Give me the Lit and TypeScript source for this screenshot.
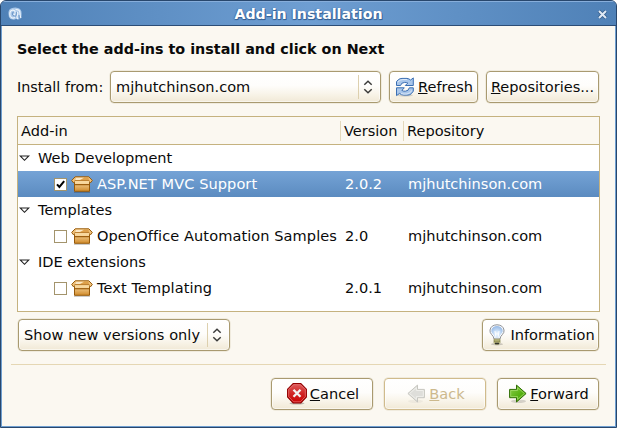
import { LitElement, html, css, svg, nothing } from "lit";
import { customElement, property } from "lit/decorators.js";
import { classMap } from "lit/directives/class-map.js";

const refreshIcon = svg`
<svg width="20" height="20" viewBox="0 0 20 20">
  <ellipse cx="10" cy="18.3" rx="8" ry="1.4" fill="#000" opacity=".13"/>
  <path d="M1.5 8.5V4.6L3.4 2.6Q5 1.4 7 1.4H12Q14 1.6 15.6 3L18.3 .9V8.5H10.3L12.8 6Q11.6 5.3 9.6 5.4Q6 5.6 5.6 8.5Z" fill="#a9c6ea" stroke="#3b6fb3" stroke-linejoin="round"/>
  <path d="M18.3 10.8V14.2L16.4 16.6Q15 18 13 18.1H8.5Q6.2 18 4.6 16.4L1.5 18.6V10.8H9.3L6.9 13.4Q8.4 14.4 10.4 14.2Q13.6 14 14.3 10.8Z" fill="#a9c6ea" stroke="#3b6fb3" stroke-linejoin="round"/>
  <path d="M2.8 5.2Q5 2.5 8 2.5H12M6 16.6Q9 17.4 12 17Q15 16.2 17 13.5" fill="none" stroke="#dbe8f8"/>
</svg>`;

const bulbIcon = svg`
<svg width="20" height="22" viewBox="0 0 20 22">
  <defs><radialGradient id="glass" cx=".5" cy=".65" r=".6"><stop offset="0" stop-color="#fafdff"/><stop offset=".45" stop-color="#c9dff7"/><stop offset="1" stop-color="#9bbce6"/></radialGradient></defs>
  <ellipse cx="10" cy="20.2" rx="6" ry="1.2" fill="#000" opacity=".18"/>
  <path d="M7 15Q6.8 12.5 4.6 10.5Q2.6 8.5 3 6Q4 1 10 .8Q16 1 17 6Q17.4 8.5 15.4 10.5Q13.2 12.5 13 15Z" fill="#fff" stroke="#8b8f96"/>
  <path d="M8 14Q7.8 12 5.7 9.8Q3.8 7.8 4.4 5.8Q5.7 2.2 10 2Q14.3 2.2 15.6 5.8Q16.2 7.8 14.3 9.8Q12.2 12 12 14Z" fill="url(#glass)"/>
  <path d="M8 7L9 14M12 7L11 14" stroke="#fff" stroke-width=".9"/>
  <path d="M7 15.2H13V18.5L11.5 20.3H8.5L7 18.5Z" fill="#d4d391" stroke="#8e8d58" stroke-width=".8"/>
  <path d="M7 17.1H13" stroke="#77753e"/><path d="M8 19.4H12" stroke="#34342c" stroke-width="1.6"/>
</svg>`;

const cancelIcon = svg`
<svg width="20" height="22" viewBox="0 0 20 22">
  <defs><linearGradient id="red" x2="0" y2="1"><stop offset="0" stop-color="#df5b5b"/><stop offset=".55" stop-color="#cf2222"/><stop offset="1" stop-color="#c00"/></linearGradient></defs>
  <ellipse cx="10" cy="20.3" rx="7.5" ry="1.2" fill="#000" opacity=".25"/>
  <path d="M6.2 .6H13.8L19.4 6.2V14L13.8 19.9H6.2L.6 14V6.2Z" fill="url(#red)" stroke="#920000" stroke-width="1.1"/>
  <path d="M6.6 1.7H13.4L18.3 6.6V13.6L13.4 18.8H6.6L1.7 13.6V6.6Z" fill="none" stroke="#ef8a8a" stroke-width=".8" opacity=".75"/>
  <path d="M6.5 6.7L13.5 13.7M13.5 6.7L6.5 13.7" stroke="#f4f2f2" stroke-width="2.3"/>
</svg>`;

const arrow = (cls: string) => svg`
<svg class=${cls} width="18" height="20" viewBox="0 0 18 20">
  <defs><linearGradient id="green" x2="1" y2="1"><stop offset="0" stop-color="#8ed04c"/><stop offset=".6" stop-color="#55b010"/><stop offset="1" stop-color="#4e9f09"/></linearGradient></defs>
  <ellipse class="shade" cx="9.5" cy="17.2" rx="7.5" ry="1.7"/>
  <path class="body" d="M.6 5.4H7.5V1.1L17.1 9.5L7.5 18V13.7H.6Z"/>
  <path class="shine" d="M1.7 6.5H8.6V3.6L15.4 9.5L8.6 15.5V12.6H1.7Z"/>
</svg>`;

const boxIcon = svg`
<svg width="22" height="17" viewBox="0 0 22 17">
  <defs><linearGradient id="carton" x2="0" y2="1"><stop offset="0" stop-color="#f6d397"/><stop offset="1" stop-color="#d08a2b"/></linearGradient></defs>
  <path d="M3 16.3H19" stroke="#000" stroke-width="1.2" opacity=".22"/>
  <path d="M3.5 6.5H18.5V15.3H3.5Z" fill="url(#carton)" stroke="#965909"/>
  <path d="M4 8.7H18" stroke="#9c5d0e" stroke-width="1.2"/>
  <path d="M4.2 .8H17.8L21.3 4.4L19.8 6.6L18.4 6H3.6L2.2 6.6L.7 4.4Z" fill="#f0c27b" stroke="#965909" stroke-linejoin="round"/>
  <path d="M4.5 1.5H17.5L18 4.2H4Z" fill="#dda04b"/>
  <path d="M4.8 1.8H13L9 3.9H4.2Z" fill="#fbe8c5"/>
  <path d="M3.6 4.6H18.4" stroke="#a4620e" stroke-width=".7"/>
  <path d="M4 5.1H18V7.8H4Z" fill="#f8d89f"/>
</svg>`;

const logoIcon = svg`
<svg width="16" height="14" viewBox="0 0 16 14">
  <path d="M1.5 7Q1 2.5 4.5 1.3Q8 0 11 1Q14.8 2 14.6 6.5Q14.8 11 12 12.5L9 12L7 12.8L3.5 12Q1.3 10.5 1.5 7Z" fill="#a9c7e8"/>
  <path d="M3.2 9.5Q1.8 4 5.5 3.2Q8.5 3 8.2 6Q8 8 6.2 7.8M8.5 2.7Q13 2 13 6.5Q12.8 8.5 14 11M9.8 5.2Q11 5 10.8 7Q9 10 11 12M3.5 9.5Q5 12 8 10.5" fill="none" stroke="#edf4fb" stroke-width="1.2"/>
  <path d="M6.8 5.2Q5 5 5.3 7Q5.6 9 7.6 9M8.6 9.7Q9.7 8 9.3 5M12 8L12.4 12" fill="none" stroke="#6d97c8"/>
</svg>`;

const spinIcon = svg`
<svg width="10" height="14" viewBox="0 0 10 14"><path d="M1.3 4.8L5 1.3L8.7 4.8M1.3 9.2L5 12.7L8.7 9.2" fill="none" stroke="#3c3c3a" stroke-width="1.5"/></svg>`;

const expanderIcon = svg`
<svg width="11" height="7" viewBox="0 0 11 7"><path d="M1.2 1H9.8L5.5 5.3Z" fill="#fff" stroke="#222" stroke-width="1.1"/></svg>`;

const controlStyles = css`
  :host { display: block; box-sizing: border-box; height: 32px; border: 1px solid #a99a70; border-radius: 4px;
    background: linear-gradient(#fff 0%, #fefdfb 45%, #f9f5eb 70%, #f1e9d6 100%);
    box-shadow: inset 0 0 0 1px rgba(255,255,255,.55), 0 0 0 .5px rgba(190,175,135,.35); white-space: nowrap; }
`;

@customElement("push-button")
class PushButton extends LitElement {
  @property() label = "";
  @property({ reflect: true }) kind = "";
  @property({ type: Boolean, reflect: true }) disabled = false;
  static styles = [controlStyles, css`
    :host([disabled]) { border-color: #d0bb8c; color: #ccb98d; }
    .inner { height: 30px; display: flex; align-items: center; justify-content: center; gap: 3px; }
    :host([kind="cancel"]) .inner, :host([kind="back"]) .inner, :host([kind="forward"]) .inner { padding-left: 2px; }
    :host([kind="refresh"]) .inner, :host([kind="information"]) .inner { padding-left: 1px; }
    .inner > svg { flex: none; }
    .caption { line-height: 30px; }
    .key { text-decoration: underline; text-decoration-thickness: 1px; text-underline-offset: 1px; text-decoration-skip-ink: none; }
    .back { transform: scaleX(-1); margin-right: 1px; }
    .shade { fill: #000; opacity: .14; }
    .forward .body { fill: url(#green); stroke: #2f6d04; }
    .forward .shine { fill: none; stroke: #a4dc6c; opacity: .8; }
    .back .shade { opacity: .04; }
    .back .body { fill: #dededa; stroke: #c6c6c0; }
    .back .shine { fill: none; stroke: #efefeb; }
  `];
  icon() {
    switch (this.kind) {
      case "refresh": return refreshIcon;
      case "information": return bulbIcon;
      case "cancel": return cancelIcon;
      case "back": return arrow("back");
      case "forward": return arrow("forward");
      default: return nothing;
    }
  }
  render() {
    const keyed = this.label.startsWith("_");
    const text = keyed ? this.label.slice(1) : this.label;
    return html`<div class="inner">${this.icon()}<span class="caption">${keyed ? html`<span class="key">${text[0]}</span>${text.slice(1)}` : text}</span></div>`;
  }
}

@customElement("combo-box")
class ComboBox extends LitElement {
  @property() value = "";
  static styles = [controlStyles, css`
    .inner { height: 30px; display: flex; align-items: center; padding-left: 5px; }
    .value { flex: 1; line-height: 30px; }
    .spin { display: flex; align-items: center; justify-content: center; width: 21px; height: 24px; border-left: 1px solid #ddd0ae; }
    .spin svg { margin-right: 4px; }
  `];
  render() {
    return html`<div class="inner"><span class="value">${this.value}</span><span class="spin">${spinIcon}</span></div>`;
  }
}

interface AddIn { name: string; version: string; checked: boolean; }
const groups: { title: string; items: AddIn[] }[] = [
  { title: "Web Development", items: [{ name: "ASP.NET MVC Support", version: "2.0.2", checked: true }] },
  { title: "Templates", items: [{ name: "OpenOffice Automation Samples", version: "2.0", checked: false }] },
  { title: "IDE extensions", items: [{ name: "Text Templating", version: "2.0.1", checked: false }] },
];

@customElement("app-root")
class AppRoot extends LitElement {
  static styles = css`
    :host { display: block; width: 617px; height: 428px; font: 14.55px "DejaVu Sans", sans-serif; color: #0a0a0a; background: #fff; }
    .window { box-sizing: border-box; height: 428px; border: 1px solid #28476d; border-radius: 6px 6px 0 0; background: #6f9fd0; display: flex; flex-direction: column; overflow: hidden; white-space: nowrap; }
    .titlebar { box-sizing: border-box; height: 25px; flex: none; display: grid; grid-template-columns: 40px 1fr 40px; align-items: center; border-top: 1px solid #87aedb; border-bottom: 1px solid #2c4d76; background: linear-gradient(90deg, #4f81b7, #6e9ed2 50%, #4f81b7); }
    .logo { padding-left: 14px; display: flex; }
    .logo svg { margin-left: -8px; }
    .title { text-align: center; color: #fff; line-height: 22px; text-shadow: 1px 1px 0 #3a6496, 0 1px 1px #3a6496, -1px 0 1px #4a76aa; font-weight: bold; font-size: 14.2px; }
    .close { justify-self: end; margin: 1px 8px 0 0; display: flex; }
    .content { box-sizing: border-box; flex: 1; margin: 0 1px 1px; padding: 11px 9px 0; background: #fbf8f1; }
    .panel { margin-left: 6px; width: 583px; }
    .heading { font-weight: bold; font-size: 14.33px; line-height: 24px; height: 34px; }
    .source { display: flex; align-items: center; height: 32px; width: 582px; }
    .source label { width: 93px; font-size: 14.4px; line-height: 32px; }
    .from { width: 271px; margin-right: 8px; }
    .refresh { width: 89px; margin-right: 8px; }
    .repos { width: 113px; }
    .tree { box-sizing: border-box; margin-top: 13px; height: 196px; border: 1px solid #c5b27f; background: #fff; }
    .row { display: grid; grid-template-columns: 322px 63px 1fr; height: 26px; line-height: 26px; }
    .head { box-sizing: border-box; height: 28px; padding: 0; background: #fbf8f1; border-bottom: 1px solid #c5b27f; align-items: center; }
    .head .cell { padding-left: 3px; }
    .head .cell + .cell { border-left: 1px solid #e3d8bb; height: 20px; line-height: 20px; }
    .group { display: flex; align-items: center; gap: 8px; height: 26px; line-height: 26px; padding-left: 1px; }
    .selected { color: #fff; background: linear-gradient(#75a3d6, #5b8bc0); }
    .name { display: flex; align-items: center; padding-left: 36px; letter-spacing: .08px; }
    .name svg { margin-right: 4px; }
    .check { box-sizing: border-box; width: 13px; height: 13px; border: 1px solid #a3946c; background: #fff; margin-right: 4px; display: flex; }
    .name .check svg { margin: 0; flex: none; }
    .ver { padding-left: 5px; } .repo { padding-left: 5px; }
    .filters { display: flex; justify-content: space-between; margin: 7px 0 0 1px; width: 581px; }
    .show { width: 212px; letter-spacing: .06px; }
    .info { width: 117px; }
    .rule { margin: 13px 0; height: 1px; background: #e5d7b4; }
    .actions { display: flex; justify-content: flex-end; gap: 11px; margin-right: 7px; }
    .actions push-button { width: 102px; }
  `;
  row(a: AddIn) {
    return html`<div class=${classMap({ row: true, selected: a.checked })}>
      <div class="name"><span class="check">${a.checked ? svg`<svg width="11" height="11" viewBox="0 0 11 11"><path d="M2 5.3L4.4 8L9.2 2.2" fill="none" stroke="#000" stroke-width="2"/></svg>` : nothing}</span>${boxIcon}<span>${a.name}</span></div><div class="ver">${a.version}</div><div class="repo">mjhutchinson.com</div></div>`;
  }
  render() {
    return html`<div class="window">
      <div class="titlebar"><span class="logo">${logoIcon}</span><span class="title">Add-in Installation</span><span class="close"><svg width="11" height="11" viewBox="0 0 11 11"><path d="M2 2L9 9M9 2L2 9" stroke="#37608f" stroke-width="3.8"/><path d="M2 2L9 9M9 2L2 9" stroke="#dfe9f5" stroke-width="2"/></svg></span></div>
      <div class="content">
        <div class="panel">
          <div class="heading">Select the add-ins to install and click on Next</div>
          <div class="source"><label>Install from:</label><combo-box class="from" value="mjhutchinson.com"></combo-box><push-button class="refresh" kind="refresh" label="_Refresh"></push-button><push-button class="repos" label="_Repositories..."></push-button></div>
          <div class="tree">
            <div class="row head"><div class="cell">Add-in</div><div class="cell">Version</div><div class="cell">Repository</div></div>
            ${groups.map(g => html`<div class="group">${expanderIcon}<span>${g.title}</span></div>${g.items.map(a => this.row(a))}`)}
          </div>
          <div class="filters"><combo-box class="show" value="Show new versions only"></combo-box><push-button class="info" kind="information" label="Information"></push-button></div>
        </div>
        <div class="rule"></div>
        <div class="actions"><push-button kind="cancel" label="_Cancel"></push-button><push-button kind="back" label="_Back" disabled></push-button><push-button kind="forward" label="_Forward"></push-button></div>
      </div>
    </div>`;
  }
}
